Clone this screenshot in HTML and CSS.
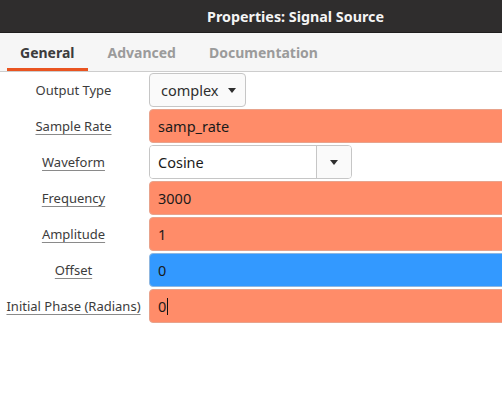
FILE: index.html
```html
<!DOCTYPE html>
<html>
<head>
<meta charset="utf-8">
<link rel="stylesheet" href="styles.css">
</head>
<body>
<div class="window">
  <header class="titlebar"><span class="title">Properties: Signal Source</span></header>
  <nav class="tabs">
    <div class="tab active">General</div>
    <div class="tab">Advanced</div>
    <div class="tab">Documentation</div>
  </nav>
  <main class="form">
    <div class="label plain">Output Type</div>
    <div class="field"><div class="combo-btn">complex <span class="arrow"></span></div></div>

    <div class="label">Sample Rate</div>
    <div class="field"><div class="entry warn">samp_rate</div></div>

    <div class="label">Waveform</div>
    <div class="field"><div class="combo-entry"><div class="ce-text">Cosine</div><div class="ce-btn"><span class="arrow"></span></div></div></div>

    <div class="label">Frequency</div>
    <div class="field"><div class="entry warn">3000</div></div>

    <div class="label">Amplitude</div>
    <div class="field"><div class="entry warn">1</div></div>

    <div class="label">Offset</div>
    <div class="field"><div class="entry blue">0</div></div>

    <div class="label">Initial Phase (Radians)</div>
    <div class="field"><div class="entry warn">0<span class="caret"></span></div></div>
  </main>
</div>
</body>
</html>
```
FILE: styles.css
```css
html, body {
  margin: 0;
  padding: 0;
  background: #ffffff;
}
body {
  font-family: "Noto Sans", "DejaVu Sans", sans-serif;
}
.window {
  width: 502px;
  height: 408px;
  overflow: hidden;
}
.titlebar {
  height: 32px;
  background: #2f2d2d;
  border-bottom: 1px solid #1f1e1e;
  display: flex;
  align-items: center;
  padding-left: 207px;
}
.title {
  color: #f4f4f4;
  font-weight: bold;
  font-size: 14.3px;
  white-space: nowrap;
}
.tabs {
  height: 38px;
  background: #f6f6f6;
  border-bottom: 1px solid #cdcdcd;
  display: flex;
  gap: 7px;
  padding-left: 7px;
}
.tab {
  padding: 3px 13px 0;
  display: flex;
  align-items: center;
  font-size: 14px;
  font-weight: bold;
  color: #9b9b9b;
  border-bottom: 3px solid transparent;
}
.tab.active {
  color: #3c3c3c;
  border-bottom-color: #e95420;
}
.form {
  display: grid;
  grid-template-columns: 133px 1fr;
  column-gap: 9px;
  row-gap: 2px;
  padding: 1px 0 0 7px;
}
.label {
  font-size: 13px;
  color: #3c3c3c;
  white-space: nowrap;
  display: flex;
  align-items: center;
  justify-content: center;
  text-decoration: underline;
  text-decoration-color: #8a8a8a;
  text-underline-offset: 3px;
  height: 34px;
}
.label.plain {
  text-decoration: none;
}
.field {
  display: flex;
  height: 34px;
  margin-right: -8px;
}
.entry {
  flex: 1;
  box-sizing: border-box;
  height: 34px;
  border: 1px solid #c8c8c8;
  border-radius: 4px;
  padding-left: 8px;
  display: flex;
  align-items: center;
  font-size: 14.5px;
  color: #1a1a1a;
}
.entry.warn {
  background: #ff8c69;
  border-color: #e8a38c;
}
.entry.blue {
  background: #3399ff;
  border-color: #8fb7e0;
}
.caret {
  display: inline-block;
  width: 1px;
  height: 17px;
  background: #111;
  margin-left: 1px;
}
.combo-btn {
  box-sizing: border-box;
  width: 97px;
  height: 34px;
  border: 1px solid #c6c6c6;
  border-radius: 4px;
  background: #fafafa;
  display: flex;
  align-items: center;
  padding-left: 11px;
  font-size: 14.5px;
  color: #2e2e2e;
  gap: 9px;
}
.arrow {
  display: inline-block;
  width: 0;
  height: 0;
  border-left: 4.5px solid transparent;
  border-right: 4.5px solid transparent;
  border-top: 5px solid #2e2e2e;
}
.combo-entry {
  box-sizing: border-box;
  width: 203px;
  height: 34px;
  border: 1px solid #c6c6c6;
  border-radius: 4px;
  display: flex;
  overflow: hidden;
}
.ce-text {
  flex: 1;
  background: #ffffff;
  display: flex;
  align-items: center;
  padding-left: 8px;
  font-size: 14.5px;
  color: #1a1a1a;
  border-right: 1px solid #c6c6c6;
}
.ce-btn {
  width: 34px;
  background: #fafafa;
  display: flex;
  align-items: center;
  justify-content: center;
}
```
